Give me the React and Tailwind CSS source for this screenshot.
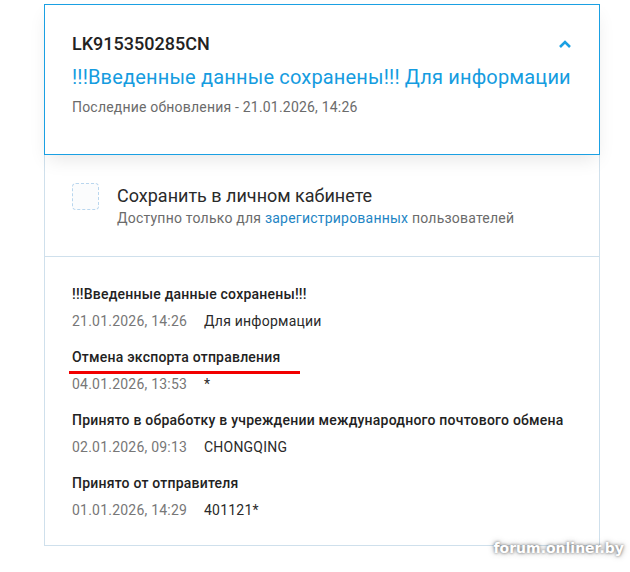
import React from "react";

const events = [
  { title: "!!!Введенные данные сохранены!!!", date: "21.01.2026, 14:26", place: "Для информации" },
  { title: "Отмена экспорта отправления", date: "04.01.2026, 13:53", place: "*", marked: true },
  {
    title: "Принято в обработку в учреждении международного почтового обмена",
    date: "02.01.2026, 09:13",
    place: "CHONGQING",
  },
  { title: "Принято от отправителя", date: "01.01.2026, 14:29", place: "401121*" },
];

const App = () => {
  return (
    <div className="relative w-[630px] h-[572px] bg-white overflow-hidden font-['Roboto',sans-serif]">
      <div className="ml-[44px] pt-[4px] w-[556px]">
        {/* header */}
        <div className="relative z-10 h-[151px] bg-white border border-[#1aa0e3] shadow-[0_8px_18px_-4px_rgba(0,0,0,0.10)] pl-[27px] pr-[28px] pt-[28px]">
          <div className="flex items-center justify-between">
            <h2 className="text-[18px] leading-[22px] font-medium text-[#222]">LK915350285CN</h2>
            <svg width="14" height="10" viewBox="0 0 14 10" className="mr-[-1px]">
              <path d="M2 8 L7 3 L12 8" fill="none" stroke="#1aa0e3" strokeWidth="2.6" />
            </svg>
          </div>
          <p className="mt-[10px] text-[20px] leading-[24px] tracking-[0.17px] text-[#159ce0]">
            !!!Введенные данные сохранены!!! Для информации
          </p>
          <p className="mt-[9px] text-[14px] leading-[18px] tracking-[0.2px] text-[#6b6b6b]">
            Последние обновления - 21.01.2026, 14:26
          </p>
        </div>

        {/* save block */}
        <div className="border-x border-[#cfe0ec] h-[101px] flex items-start gap-[18px] pl-[27px] pt-[27px]">
          <div className="mt-[1px] w-[27px] h-[27px] rounded-[4px] border border-dashed border-[#b9d6ee] bg-[#fbfcfd]" />
          <div className="pt-[3px]">
            <p className="text-[18px] leading-[22px] text-[#2a2a2a]">Сохранить в личном кабинете</p>
            <p className="mt-[2px] text-[14px] leading-[18px] tracking-[0.22px] text-[#6b6b6b]">
              Доступно только для <span className="text-[#1e85c4]">зарегистрированных</span> пользователей
            </p>
          </div>
        </div>

        {/* events */}
        <div className="border border-[#cfe0ec] h-[290px] pl-[27px] pt-[28px] tracking-[0.22px]">
          {events.map((e) => (
            <div key={e.date} className="h-[63px]">
              <p className="relative text-[14px] leading-[18px] font-medium text-[#222]">
                {e.title}
                {e.marked && (
                  <span className="absolute left-[-3px] top-[23px] w-[231px] h-[3px] bg-[#f20000]" />
                )}
              </p>
              <div className="mt-[9px] flex text-[14px] leading-[18px]">
                <span className="w-[132px] text-[#777]">{e.date}</span>
                <span className="text-[#2a2a2a]">{e.place}</span>
              </div>
            </div>
          ))}
        </div>
      </div>

      <span className="absolute right-[2px] top-[539px] px-[4px] text-[14px] leading-[18px] font-bold text-white font-['DejaVu_Sans',sans-serif] [text-shadow:0_0_3px_rgba(0,0,0,0.55),0_0_6px_rgba(0,0,0,0.35)]">
        forum.onliner.by
      </span>
    </div>
  );
};

export default App;
